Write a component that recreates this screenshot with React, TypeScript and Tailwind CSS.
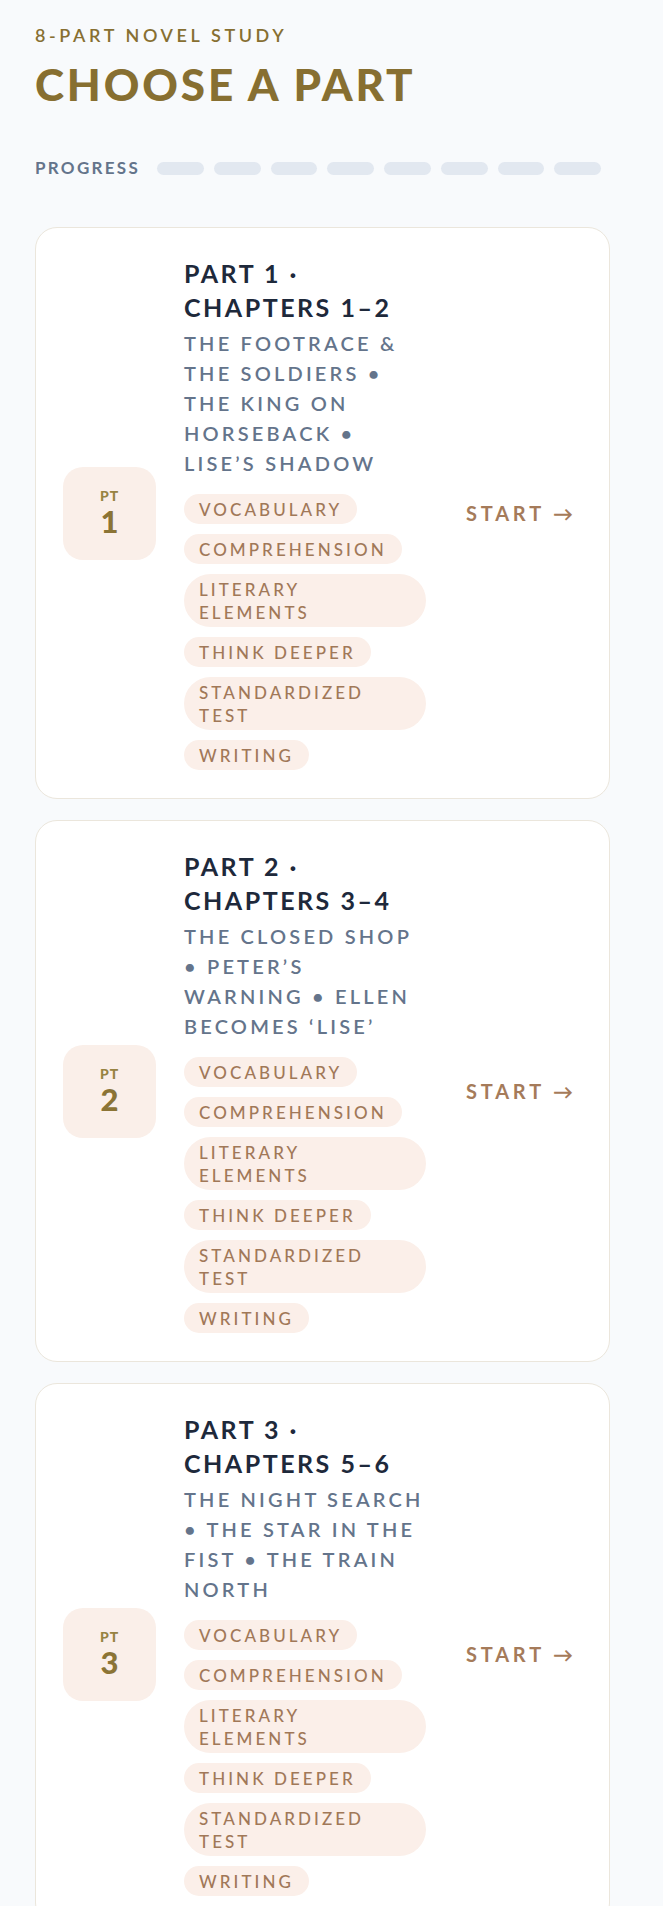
import React from 'react';

type Part = {
    num: number;
    title: string;
    desc: string;
};

const PARTS: Part[] = [
    { num: 1, title: 'Part 1 · Chapters 1–2', desc: 'The Footrace & The Soldiers • The King on Horseback • Lise’s Shadow' },
    { num: 2, title: 'Part 2 · Chapters 3–4', desc: 'The Closed Shop • Peter’s Warning • Ellen Becomes ‘Lise’' },
    { num: 3, title: 'Part 3 · Chapters 5–6', desc: 'The Night Search • The Star in the Fist • The Train North' },
];

const SECTIONS = ['Vocabulary', 'Comprehension', 'Literary Elements', 'Think Deeper', 'Standardized Test', 'Writing'];

const FONT = "font-['Lato','Noto_Sans',sans-serif]";

export default function App() {
    return (
        <div className={`min-h-screen bg-[#f8fafc] ${FONT}`}>
            <div className="w-[575px] ml-[35px] pt-[24px] pb-10">
                <p className="text-[18px] leading-[22px] font-semibold uppercase tracking-[0.2em] text-[#876f31]">
                    8-Part Novel Study
                </p>
                <h1 className="mt-[12px] text-[44px] leading-[52px] font-black uppercase tracking-[0.065em] text-[#876f31]">
                    Choose a Part
                </h1>

                {/* progress */}
                <div className="mt-[48px] h-[20px] flex items-center">
                    <span className="text-[17px] font-bold uppercase tracking-[0.135em] text-[#64748b]">Progress</span>
                    <div className="ml-[17px] w-[444px] flex gap-[10px]">
                        {Array.from({ length: 8 }).map((_, i) => (
                            <div key={i} className="flex-1 h-[13px] rounded-full bg-[#e2e8f0]" />
                        ))}
                    </div>
                </div>

                <div className="mt-[49px] flex flex-col gap-[21px]">
                    {PARTS.map((p) => (
                        <PartCard key={p.num} part={p} />
                    ))}
                </div>
            </div>
        </div>
    );
}

const PartCard = ({ part }: { part: Part }) => {
    return (
        <div className="flex items-center px-[27px] py-[28px] rounded-[22px] bg-white border border-[#ebe6dc]">
            <div className="w-[93px] h-[93px] shrink-0 rounded-[20px] bg-[#faefe9] flex flex-col items-center justify-center">
                <span className="text-[14px] leading-[16px] font-black tracking-[0.06em] text-[#978342]">PT</span>
                <span className="text-[31px] leading-[34px] font-black text-[#8b7435]">{part.num}</span>
            </div>

            <div className="ml-[28px] w-[242px] shrink-0">
                <h3 className="text-[25px] leading-[34px] font-bold uppercase tracking-[0.1em] text-[#1e293b]">
                    {part.title}
                </h3>
                <p className="mt-[4px] text-[20px] leading-[30px] font-semibold uppercase tracking-[0.16em] text-[#64748b]">
                    {part.desc}
                </p>
                <div className="mt-[16px] flex flex-col items-start gap-[10px]">
                    {SECTIONS.map((s) => (
                        <span
                            key={s}
                            className="px-[15px] py-[3.5px] rounded-full bg-[#fbefe9] text-[17px] leading-[23px] font-medium uppercase tracking-[0.18em] text-[#a17858]"
                        >
                            {s}
                        </span>
                    ))}
                </div>
            </div>

            <div className="ml-[40px] text-[20px] font-bold uppercase tracking-[0.19em] text-[#a57b5a] whitespace-nowrap">
                Start →
            </div>
        </div>
    );
};
